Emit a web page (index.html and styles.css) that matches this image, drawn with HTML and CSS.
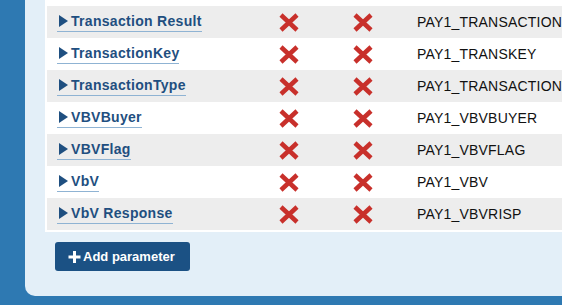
FILE: index.html
```html
<!DOCTYPE html>
<html>
<head>
<meta charset="utf-8">
<link rel="stylesheet" href="styles.css">
</head>
<body>
<div class="page">
  <div class="panel">
    <div class="table">
      <div class="row white prev"></div>
      <div class="row gray">
        <div class="name"><a class="link"><svg class="tri" viewBox="0 0 9 12"><path d="M0 0 L9 6 L0 12 Z"/></svg>Transaction Result</a></div>
        <div class="ico"><svg class="x" viewBox="0 0 20 19"><path d="M2 2 L18 17 M18 2 L2 17"/></svg></div>
        <div class="ico"><svg class="x" viewBox="0 0 20 19"><path d="M2 2 L18 17 M18 2 L2 17"/></svg></div>
        <div class="code">PAY1_TRANSACTIONRESULT</div>
      </div>
      <div class="row white">
        <div class="name"><a class="link"><svg class="tri" viewBox="0 0 9 12"><path d="M0 0 L9 6 L0 12 Z"/></svg>TransactionKey</a></div>
        <div class="ico"><svg class="x" viewBox="0 0 20 19"><path d="M2 2 L18 17 M18 2 L2 17"/></svg></div>
        <div class="ico"><svg class="x" viewBox="0 0 20 19"><path d="M2 2 L18 17 M18 2 L2 17"/></svg></div>
        <div class="code">PAY1_TRANSKEY</div>
      </div>
      <div class="row gray">
        <div class="name"><a class="link"><svg class="tri" viewBox="0 0 9 12"><path d="M0 0 L9 6 L0 12 Z"/></svg>TransactionType</a></div>
        <div class="ico"><svg class="x" viewBox="0 0 20 19"><path d="M2 2 L18 17 M18 2 L2 17"/></svg></div>
        <div class="ico"><svg class="x" viewBox="0 0 20 19"><path d="M2 2 L18 17 M18 2 L2 17"/></svg></div>
        <div class="code">PAY1_TRANSACTIONTYPE</div>
      </div>
      <div class="row white">
        <div class="name"><a class="link"><svg class="tri" viewBox="0 0 9 12"><path d="M0 0 L9 6 L0 12 Z"/></svg>VBVBuyer</a></div>
        <div class="ico"><svg class="x" viewBox="0 0 20 19"><path d="M2 2 L18 17 M18 2 L2 17"/></svg></div>
        <div class="ico"><svg class="x" viewBox="0 0 20 19"><path d="M2 2 L18 17 M18 2 L2 17"/></svg></div>
        <div class="code">PAY1_VBVBUYER</div>
      </div>
      <div class="row gray">
        <div class="name"><a class="link"><svg class="tri" viewBox="0 0 9 12"><path d="M0 0 L9 6 L0 12 Z"/></svg>VBVFlag</a></div>
        <div class="ico"><svg class="x" viewBox="0 0 20 19"><path d="M2 2 L18 17 M18 2 L2 17"/></svg></div>
        <div class="ico"><svg class="x" viewBox="0 0 20 19"><path d="M2 2 L18 17 M18 2 L2 17"/></svg></div>
        <div class="code">PAY1_VBVFLAG</div>
      </div>
      <div class="row white">
        <div class="name"><a class="link"><svg class="tri" viewBox="0 0 9 12"><path d="M0 0 L9 6 L0 12 Z"/></svg>VbV</a></div>
        <div class="ico"><svg class="x" viewBox="0 0 20 19"><path d="M2 2 L18 17 M18 2 L2 17"/></svg></div>
        <div class="ico"><svg class="x" viewBox="0 0 20 19"><path d="M2 2 L18 17 M18 2 L2 17"/></svg></div>
        <div class="code">PAY1_VBV</div>
      </div>
      <div class="row gray">
        <div class="name"><a class="link"><svg class="tri" viewBox="0 0 9 12"><path d="M0 0 L9 6 L0 12 Z"/></svg>VbV Response</a></div>
        <div class="ico"><svg class="x" viewBox="0 0 20 19"><path d="M2 2 L18 17 M18 2 L2 17"/></svg></div>
        <div class="ico"><svg class="x" viewBox="0 0 20 19"><path d="M2 2 L18 17 M18 2 L2 17"/></svg></div>
        <div class="code">PAY1_VBVRISP</div>
      </div>
    </div>
    <button class="btn"><svg class="plus" viewBox="0 0 12 12"><path d="M6 0 V12 M0 6 H12"/></svg>Add parameter</button>
  </div>
</div>
</body>
</html>
```
FILE: styles.css
```css
html, body {
  margin: 0;
  padding: 0;
  height: 305px;
  overflow: hidden;
  background: #2e79b2;
}
.page {
  padding-left: 25px;
  font-family: "Liberation Sans", Arial, sans-serif;
}
.panel {
  background: #e3eff8;
  border-bottom-left-radius: 10px;
  padding: 0 0 25px 20px;
  display: flex;
  flex-direction: column;
  align-items: flex-start;
}
.table {
  background: #fff;
  margin-top: -28px;
  padding: 2px 0 2px 2px;
  width: 600px;
  display: flex;
  flex-direction: column;
  flex-shrink: 0;
}
.row {
  height: 32px;
  flex-shrink: 0;
  display: grid;
  grid-template-columns: 209px 66px 82px 1fr;
  align-items: center;
}
.row.gray { background: #ededed; }
.row.white { background: #fff; }
.name {
  padding-left: 10px;
}
.link {
  display: inline-flex;
  align-items: center;
  gap: 3px;
  color: #1f4f80;
  font-weight: bold;
  font-size: 14px;
  letter-spacing: 0.3px;
  line-height: 16px;
  padding-bottom: 2px;
  border-bottom: 1px solid #8fb3d3;
  white-space: nowrap;
}
.tri {
  width: 9px;
  height: 12px;
  margin-left: 2px;
  fill: #1f4f80;
}
.ico {
  display: flex;
  justify-content: center;
}
.x {
  width: 20px;
  height: 19px;
  stroke: #c8302b;
  stroke-width: 4.5;
  fill: none;
}
.code {
  padding-left: 13px;
  font-size: 14px;
  letter-spacing: 0.2px;
  color: #111;
  white-space: nowrap;
}
.btn {
  margin-top: 10px;
  margin-left: 10px;
  height: 29px;
  width: 135px;
  flex-shrink: 0;
  background: #1b5184;
  border: none;
  border-radius: 3px;
  color: #fff;
  font-family: "Liberation Sans", Arial, sans-serif;
  font-weight: bold;
  font-size: 13px;
  display: flex;
  align-items: center;
  padding: 0 0 0 13px;
  gap: 2px;
}
.plus {
  width: 13px;
  height: 12px;
  stroke: #fff;
  stroke-width: 3;
  fill: none;
}
```
